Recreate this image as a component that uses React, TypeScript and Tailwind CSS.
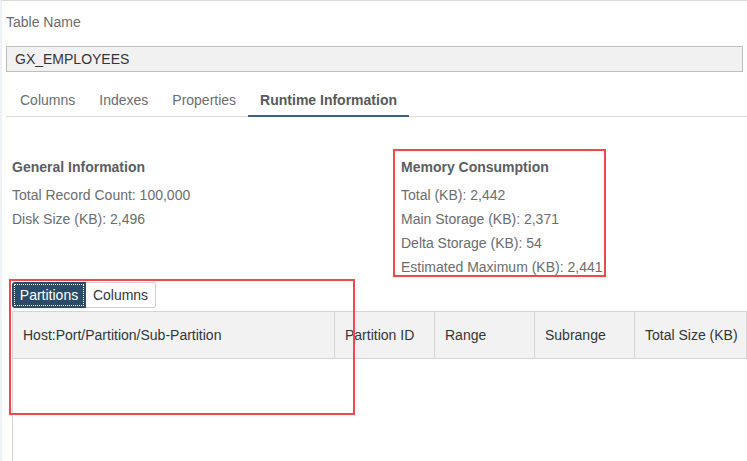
import React from 'react';

const tabs = ['Columns', 'Indexes', 'Properties', 'Runtime Information'];
const headers = ['Host:Port/Partition/Sub-Partition', 'Partition ID', 'Range', 'Subrange', 'Total Size (KB)'];

const App = () => {
  return (
    <div
      className="relative w-[747px] h-[461px] overflow-hidden bg-white border-t border-[#dadada] border-l-2 border-l-[#eef2f6] text-[14px] flex flex-col"
      style={{ fontFamily: '"Liberation Sans", Arial, sans-serif' }}
    >
      <div className="pl-[4px] pr-[4px] flex flex-col flex-1">
        <div className="mt-[11px] h-[20px] leading-[20px] text-[#6a6d70]">Table Name</div>

        <div className="mt-[14px] h-[26px] border border-[#bdbdbd] bg-[#f1f1f1] pl-[8px] flex items-center text-[#32363a]">
          GX_EMPLOYEES
        </div>

        <div className="mt-[12px] flex border-b border-[#dcdcdc] -mr-[4px] pl-[2px]">
          {tabs.map((t) => {
            const active = t === 'Runtime Information';
            return (
              <div
                key={t}
                className={
                  active
                    ? 'h-[33px] -mb-px px-3 pt-[1px] flex items-center font-bold text-[#58595b] border-b-2 border-[#35618a]'
                    : 'h-[33px] -mb-px px-3 pb-[1px] flex items-center text-[#6a6d70]'
                }
              >
                {t}
              </div>
            );
          })}
        </div>

        <div className="mt-[38px] pl-[6px] flex">
          <div className="w-[389px]">
            <div className="h-[24px] leading-[24px] font-bold text-[#5a5e62]">General Information</div>
            <div className="mt-[4px] leading-[24px] text-[#6a6d70]">
              <div>Total Record Count: 100,000</div>
              <div>Disk Size (KB): 2,496</div>
            </div>
          </div>
          <div>
            <div className="h-[24px] leading-[24px] font-bold text-[#5a5e62]">Memory Consumption</div>
            <div className="mt-[4px] leading-[24px] text-[#6a6d70]">
              <div>Total (KB): 2,442</div>
              <div>Main Storage (KB): 2,371</div>
              <div>Delta Storage (KB): 54</div>
              <div>Estimated Maximum (KB): 2,441</div>
            </div>
          </div>
        </div>

        <div className="mt-[3px] ml-[6px] flex h-[26px]">
          <div className="w-[74px] bg-[#2c4b69] rounded-l-[3px] p-[2px] flex">
            <div className="flex-1 border border-dotted border-white flex items-center justify-center text-white">
              Partitions
            </div>
          </div>
          <div className="w-[70px] border border-l-0 border-[#cfcfcf] rounded-r-[3px] flex items-center justify-center text-[#32363a]">
            Columns
          </div>
        </div>

        <div className="mt-[3px] ml-[6px] -mr-[4px] flex-1 border-l border-[#d5d5d5]">
          <div className="grid grid-cols-[322px_100px_100px_100px_1fr] h-[48px] bg-[#f2f2f2] border-t border-b border-[#d5d5d5] text-[#32363a]">
            {headers.map((h) => (
              <div key={h} className="border-r border-[#d5d5d5] pl-[10px] flex items-center whitespace-nowrap">
                {h}
              </div>
            ))}
          </div>
        </div>
      </div>

      {/* annotation boxes */}
      <div className="absolute left-[391px] top-[148px] w-[213px] h-[128px] border-2 border-[#f4474a]" />
      <div className="absolute left-[7px] top-[278px] w-[346px] h-[136px] border-2 border-[#f4474a]" />
    </div>
  );
};

export default App;
